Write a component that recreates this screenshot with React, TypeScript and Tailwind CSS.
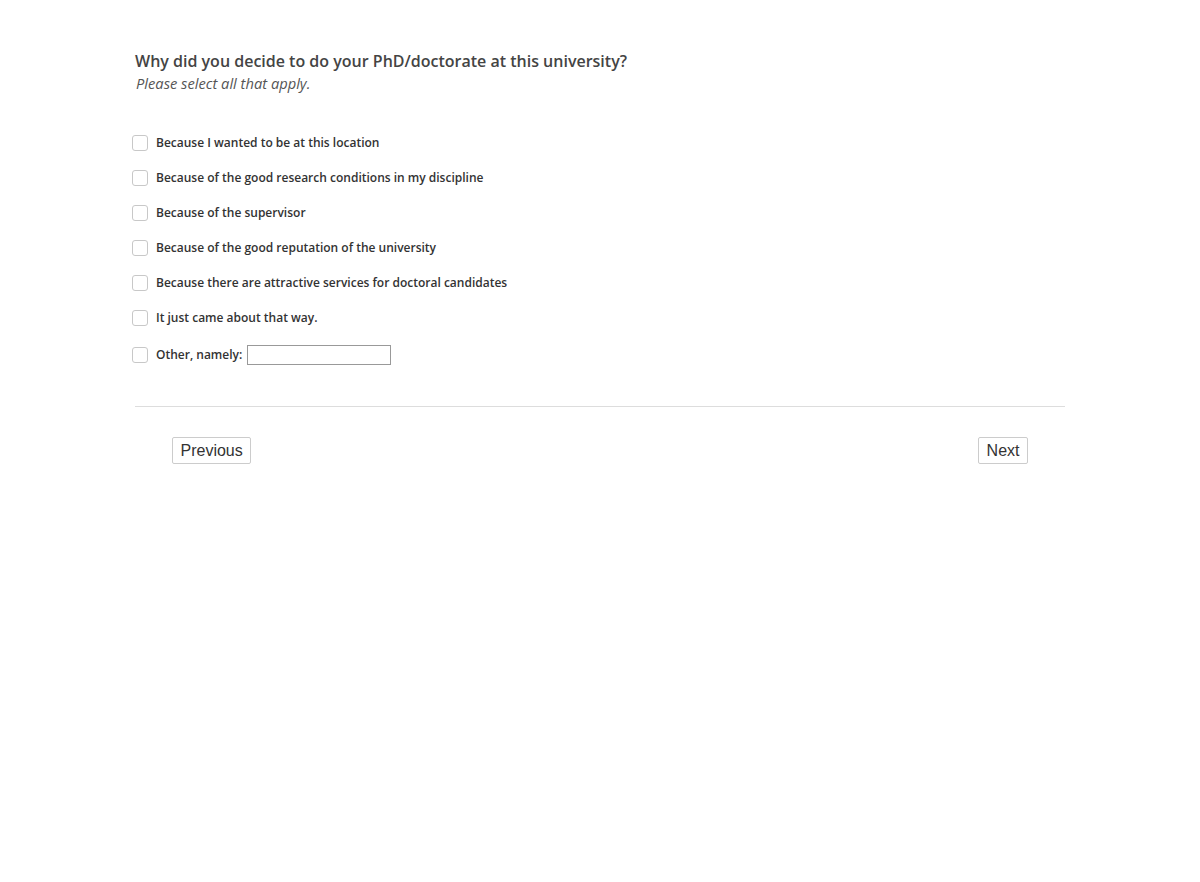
import React from "react";

const options = [
  "Because I wanted to be at this location",
  "Because of the good research conditions in my discipline",
  "Because of the supervisor",
  "Because of the good reputation of the university",
  "Because there are attractive services for doctoral candidates",
  "It just came about that way.",
];

function Box() {
  return <span className="inline-block w-[16px] h-[16px] shrink-0 rounded-[3px] border border-[#c8c8c8] bg-white" />;
}

export default function App() {
  return (
    <div className="min-h-[882px] bg-white" style={{ fontFamily: '"Open Sans", sans-serif' }}>
      <div className="w-[930px] ml-[135px] pt-[51px]">
        <h1 className="text-[16px] leading-[20px] font-semibold text-[#444]">
          Why did you decide to do your PhD/doctorate at this university?
        </h1>
        <p className="text-[14.7px] leading-[20px] italic text-[#555] ml-[1px] mt-[2px]">Please select all that apply.</p>
        <div className="mt-[32px] -ml-[3px] flex flex-col">
          {options.map((o) => (
            <label key={o} className="flex items-center h-[35px] gap-[8px]">
              <Box />
              <span className="text-[12px] font-semibold text-[#333]">{o}</span>
            </label>
          ))}
          <label className="flex items-center h-[40px] gap-[8px]">
            <Box />
            <span className="text-[12px] font-semibold text-[#333]">Other, namely:</span>
            <input className="-ml-[3px] w-[144px] h-[20px] border border-[#999] bg-white" />
          </label>
        </div>
        <div className="mt-[31px] border-t border-[#ddd]" />
        <div className="flex justify-between pl-[37px] pr-[37px] mt-[30px]" style={{ fontFamily: '"Liberation Sans", Arial, sans-serif' }}>
          <button className="h-[27px] px-[7.5px] text-[16px] text-[#333] border border-[#ccc] rounded-[2px] bg-white">Previous</button>
          <button className="h-[27px] px-[7.5px] text-[16px] text-[#333] border border-[#ccc] rounded-[2px] bg-white">Next</button>
        </div>
      </div>
    </div>
  );
}
